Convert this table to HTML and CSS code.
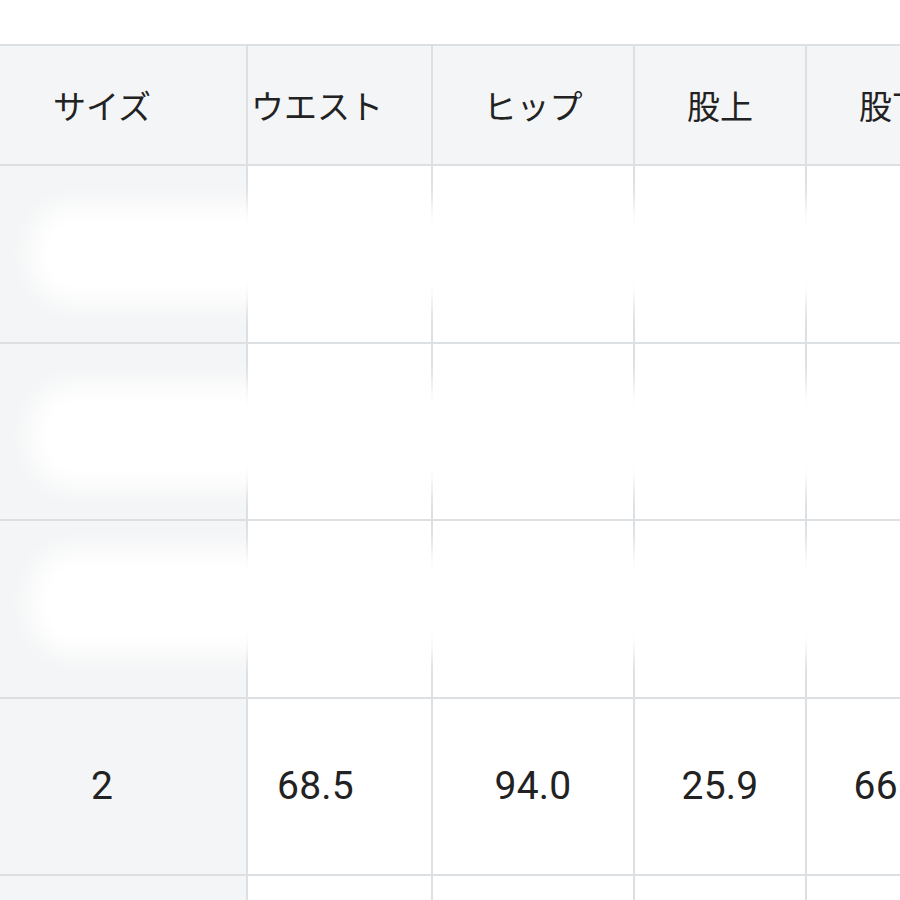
FILE: index.html
```html
<!DOCTYPE html>
<html lang="ja">
<head>
<meta charset="utf-8">
<title>サイズ表</title>
<link rel="stylesheet" href="styles.css">
</head>
<body>
<div class="page">
  <div class="table">
    <div class="row head">
      <div class="cell c1">サイズ</div>
      <div class="cell c2 lead">ウエスト</div>
      <div class="cell">ヒップ</div>
      <div class="cell">股上</div>
      <div class="cell">股下</div>
    </div>
    <div class="row body hidden r1">
      <div class="cell c1 side"></div>
      <div class="cell c2"></div>
      <div class="cell"></div>
      <div class="cell"></div>
      <div class="cell"></div>
      <div class="veil"></div>
    </div>
    <div class="row body hidden r2">
      <div class="cell c1 side"></div>
      <div class="cell c2"></div>
      <div class="cell"></div>
      <div class="cell"></div>
      <div class="cell"></div>
      <div class="veil"></div>
    </div>
    <div class="row body hidden r3">
      <div class="cell c1 side"></div>
      <div class="cell c2"></div>
      <div class="cell"></div>
      <div class="cell"></div>
      <div class="cell"></div>
      <div class="veil"></div>
    </div>
    <div class="row body">
      <div class="cell c1 side num">2</div>
      <div class="cell c2 num">68.5</div>
      <div class="cell num">94.0</div>
      <div class="cell num">25.9</div>
      <div class="cell num">66.0</div>
    </div>
    <div class="row body">
      <div class="cell c1 side"></div>
      <div class="cell c2"></div>
      <div class="cell"></div>
      <div class="cell"></div>
      <div class="cell"></div>
    </div>
  </div>
</div>
</body>
</html>
```
FILE: styles.css
```css
html, body {
  margin: 0;
  padding: 0;
  background: #ffffff;
  overflow: hidden;
}

.page {
  width: 900px;
  height: 900px;
  overflow: hidden;
  padding-top: 44px;
  box-sizing: border-box;
}

.table {
  display: flex;
  flex-direction: column;
  gap: 2px;
  padding-top: 2px;
  background: #dde0e3;
  width: 977px;
}

.row {
  display: grid;
  grid-template-columns: 246px 183px 200px 170px 170px;
  column-gap: 2px;
  position: relative;
  overflow: hidden;
}

.head {
  height: 118px;
}

.body {
  height: 175.5px;
}

.cell {
  display: flex;
  align-items: center;
  justify-content: center;
  white-space: nowrap;
  background: #ffffff;
  color: #222222;
  font-family: "Noto Sans CJK JP", "Noto Sans", sans-serif;
  font-size: 33px;
  font-weight: 400;
}

.head .cell,
.side {
  background: #f4f5f6;
}

.c1 {
  padding-right: 42px;
}

.c2 {
  padding-right: 48px;
}

.head .lead {
  justify-content: flex-start;
  padding-right: 0;
  padding-left: 3px;
}

.num {
  font-family: Roboto, "Liberation Sans", sans-serif;
  font-size: 39px;
  letter-spacing: 0.2px;
}

.veil {
  position: absolute;
  left: 30px;
  right: -80px;
  top: 38px;
  height: 100px;
  background: #ffffff;
  border-radius: 44px;
  filter: blur(13px);
}

.r2 .veil {
  top: 40px;
  height: 104px;
}

.r3 .veil {
  top: 28px;
  height: 106px;
}
```
